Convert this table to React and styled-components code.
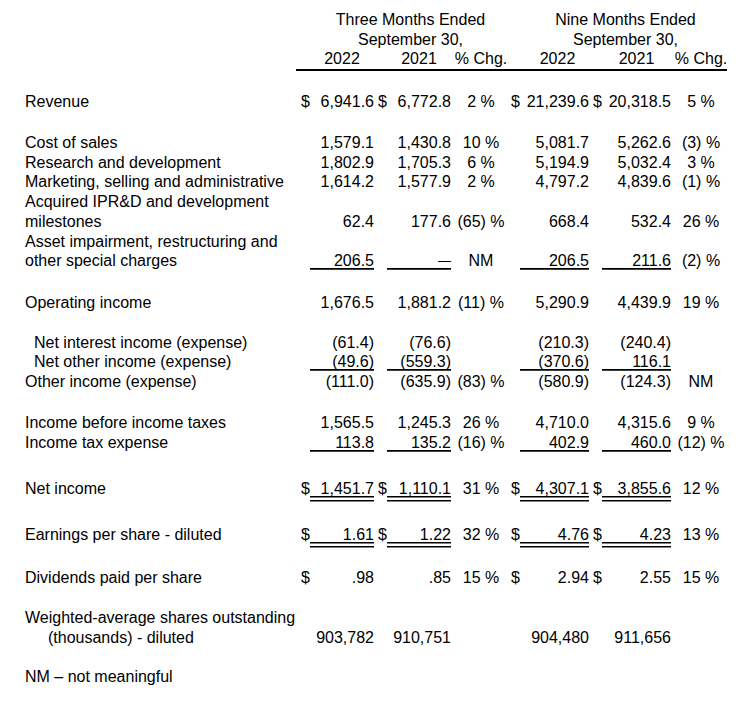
import React from 'react';
import styled, { createGlobalStyle } from 'styled-components';

const COLS = '296px 14px 64px 13px 64px 60px 9px 69px 13px 69px 60px';
const DASH = '—';

const rows = [
    { label: 'Revenue', gap: 21, usd: [1, 1, 1, 1], q: ['6,941.6', '6,772.8', '2 %'], n: ['21,239.6', '20,318.5', '5 %'] },
    { label: 'Cost of sales', gap: 21.5, q: ['1,579.1', '1,430.8', '10 %'], n: ['5,081.7', '5,262.6', '(3) %'] },
    { label: 'Research and development', q: ['1,802.9', '1,705.3', '6 %'], n: ['5,194.9', '5,032.4', '3 %'] },
    { label: 'Marketing, selling and administrative', q: ['1,614.2', '1,577.9', '2 %'], n: ['4,797.2', '4,839.6', '(1) %'] },
    { label: ['Acquired IPR&D and development', 'milestones'], q: ['62.4', '177.6', '(65) %'], n: ['668.4', '532.4', '26 %'] },
    { label: ['Asset impairment, restructuring and', 'other special charges'], rule: 'single', q: ['206.5', DASH, 'NM'], n: ['206.5', '211.6', '(2) %'] },
    { label: 'Operating income', gap: 21.5, q: ['1,676.5', '1,881.2', '(11) %'], n: ['5,290.9', '4,439.9', '19 %'] },
    { label: 'Net interest income (expense)', indent: 34, gap: 20.25, q: ['(61.4)', '(76.6)', ''], n: ['(210.3)', '(240.4)', ''] },
    { label: 'Net other income (expense)', indent: 34, rule: 'single', q: ['(49.6)', '(559.3)', ''], n: ['(370.6)', '116.1', ''] },
    { label: 'Other income (expense)', q: ['(111.0)', '(635.9)', '(83) %'], n: ['(580.9)', '(124.3)', 'NM'] },
    { label: 'Income before income taxes', gap: 21.5, q: ['1,565.5', '1,245.3', '26 %'], n: ['4,710.0', '4,315.6', '9 %'] },
    { label: 'Income tax expense', rule: 'single', q: ['113.8', '135.2', '(16) %'], n: ['402.9', '460.0', '(12) %'] },
    { label: 'Net income', gap: 26.25, rule: 'double', usd: [1, 1, 1, 1], q: ['1,451.7', '1,110.1', '31 %'], n: ['4,307.1', '3,855.6', '12 %'] },
    { label: 'Earnings per share - diluted', gap: 22.5, rule: 'double', usd: [1, 1, 1, 1], q: ['1.61', '1.22', '32 %'], n: ['4.76', '4.23', '13 %'] },
    { label: 'Dividends paid per share', gap: 18.75, usd: [1, 0, 1, 1], q: ['.98', '.85', '15 %'], n: ['2.94', '2.55', '15 %'] },
    { label: ['Weighted-average shares outstanding', '(thousands) - diluted'], wrap: 23, gap: 20.25, q: ['903,782', '910,751', ''], n: ['904,480', '911,656', ''] },
];

const App = () => {
    return (
        <>
            <GlobalStyle />
            <Page>
                <HeadGrid>
                    <GroupTitle $col="3 / 7">Three Months Ended<br />September 30,</GroupTitle>
                    <GroupTitle $col="8 / 12">Nine Months Ended<br />September 30,</GroupTitle>
                    <ColHead $col={3}>2022</ColHead>
                    <ColHead $col={5}>2021</ColHead>
                    <ColHead $col={6}>% Chg.</ColHead>
                    <ColHead $col={8} $shift={6}>2022</ColHead>
                    <ColHead $col={10}>2021</ColHead>
                    <ColHead $col={11}>% Chg.</ColHead>
                    <HeadRule />
                </HeadGrid>

                {rows.map((r, i) => {
                    const usd = r.usd || [0, 0, 0, 0];
                    const lines = Array.isArray(r.label) ? r.label : [r.label];
                    return (
                        <Row key={i} $gap={r.gap}>
                            <Label $indent={r.indent}>
                                {lines.map((l, j) => (
                                    <LabelLine key={j} $indent={j > 0 ? r.wrap : 0}>{l}</LabelLine>
                                ))}
                            </Label>
                            <Dollar>{usd[0] ? '$' : '\u00a0'}</Dollar>
                            <Value $rule={r.rule}>{r.q[0] === DASH ? <Dash>{DASH}</Dash> : r.q[0]}</Value>
                            <Dollar>{usd[1] ? '$' : '\u00a0'}</Dollar>
                            <Value $rule={r.rule}>{r.q[1] === DASH ? <Dash>{DASH}</Dash> : r.q[1]}</Value>
                            <Pct>{r.q[2] || '\u00a0'}</Pct>
                            <Dollar>{usd[2] ? '$' : '\u00a0'}</Dollar>
                            <Value $rule={r.rule}>{r.n[0]}</Value>
                            <Dollar>{usd[3] ? '$' : '\u00a0'}</Dollar>
                            <Value $rule={r.rule}>{r.n[1]}</Value>
                            <Pct>{r.n[2] || '\u00a0'}</Pct>
                        </Row>
                    )
                })}

                <Note>NM – not meaningful</Note>
            </Page>
        </>
    )
}

export default App

const GlobalStyle = createGlobalStyle`
    body {
        margin: 0;
        background: #fff;
        color: #000;
        font-family: "Liberation Sans", Arial, sans-serif;
        font-size: 16px;
    }
`;

const Page = styled.div`
    width: 754px;
    padding-top: 10px;
`;

const HeadGrid = styled.div`
    display: grid;
    grid-template-columns: ${COLS};
    line-height: 19.5px;
`;

const GroupTitle = styled.div`
    grid-column: ${p => p.$col};
    grid-row: 1;
    text-align: center;
`;

const ColHead = styled.div`
    grid-column: ${p => p.$col};
    grid-row: 2;
    text-align: center;
    padding-left: ${p => p.$shift || 0}px;
    white-space: nowrap;
`;

const HeadRule = styled.div`
    grid-column: 2 / 12;
    grid-row: 3;
    height: 2px;
    margin-right: 4px;
    background: #000;
`;

const Row = styled.div`
    display: grid;
    grid-template-columns: ${COLS};
    align-items: last baseline;
    line-height: 19.75px;
    margin-top: ${p => p.$gap || 0}px;
`;

const Label = styled.div`
    padding-left: ${p => p.$indent || 25}px;
    white-space: nowrap;
`;

const LabelLine = styled.span`
    display: block;
    padding-left: ${p => p.$indent || 0}px;
`;

const Dollar = styled.div`
    text-align: right;
`;

const line = (y, h) => `linear-gradient(#000, #000) 0 ${y}px / 100% ${h}px no-repeat`;

const Value = styled.div`
    text-align: right;
    white-space: nowrap;
    padding-bottom: ${p => (p.$rule === 'double' ? 4 : 0)}px;
    background: ${p =>
        p.$rule === 'single' ? line(16.75, 1.75)
        : p.$rule === 'double' ? `${line(17, 1.5)}, ${line(20.5, 1.5)}`
        : 'none'};
`;

const Dash = styled.span`
    font-size: 13px;
    vertical-align: 1px;
`;

const Pct = styled.div`
    text-align: center;
    white-space: nowrap;
`;

const Note = styled.p`
    margin: 19.75px 0 0;
    padding-left: 25px;
    line-height: 19.75px;
`;
